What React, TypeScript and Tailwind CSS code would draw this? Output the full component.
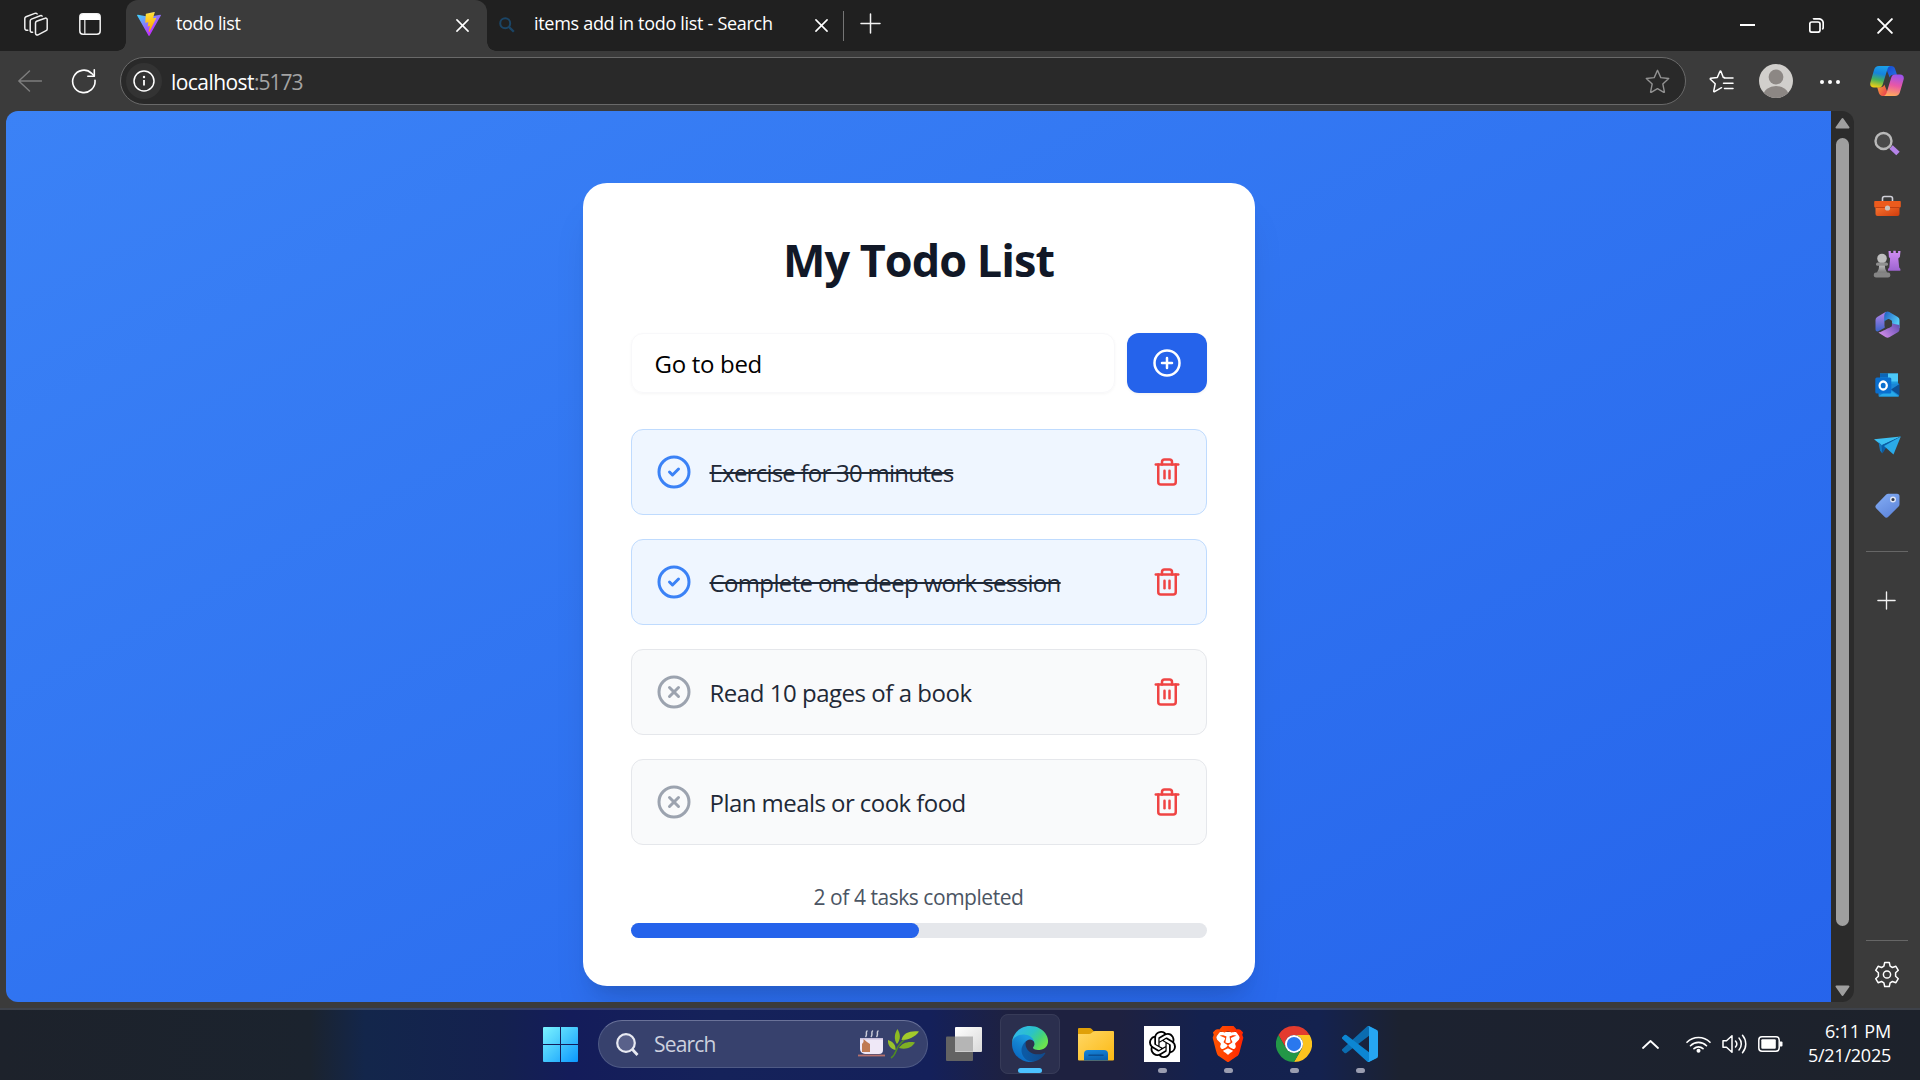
import React from "react";
import { CircleCheck, CirclePlus, CircleX, Trash2 } from "lucide-react";
import { SiBrave, SiOpenai } from "react-icons/si";

type IconProps = { className?: string };

/* ---------- browser glyphs ---------- */

const WorkspacesIcon = () => (
  <svg className="h-6 w-6" viewBox="0 0 24 24" fill="none" stroke="#f0f0f0" strokeWidth="1.5" strokeLinejoin="round" strokeLinecap="round">
    <path d="M11.500 11c0-.8.4-1.400 1.100-1.700l8.500-3.100c1-.4 2.100.2 2.100 1.300v9.400c0 .8-.4 1.400-1.100 1.700l-8.100 4.200c-1.100.5-2.500-.2-2.500-1.500z" />
    <path d="M8.600 20.300c-1.500.2-2.400-.6-2.400-1.900V8.900c0-.9.500-1.500 1.200-1.800l8.800-3.400c.8-.3 1.500-.2 1.900.4" />
    <path d="M3.800 18.300C1.900 18.400.8 17.600.8 16V6.600c0-.9.500-1.500 1.200-1.800L10.800 1.400c.9-.3 1.800-.2 2.300.5" />
  </svg>
);

const TabActionsIcon = () => (
  <svg className="h-[22px] w-[22px]" viewBox="0 0 22 22" fill="none">
    <rect x="0.800" y="0.800" width="20.400" height="20.400" rx="3.200" stroke="#f0f0f0" strokeWidth="1.500" />
    <path d="M1 4a3 3 0 0 1 3-3h14a3 3 0 0 1 3 3v3H1z" fill="#fff" />
    <path d="M5.800 7v14" stroke="#d8d8d8" strokeWidth="1.400" />
  </svg>
);

const ViteIcon = () => (
  <svg className="h-6 w-6" viewBox="0 0 256 257">
    <defs>
      <linearGradient id="viteA" x1="0" x2="0.600" y1="0.080" y2="0.800">
        <stop offset="0" stopColor="#41d1ff" />
        <stop offset="1" stopColor="#bd34fe" />
      </linearGradient>
      <linearGradient id="viteB" x1="0.430" x2="0.500" y1="0.020" y2="0.890">
        <stop offset="0" stopColor="#ffea83" />
        <stop offset="0.083" stopColor="#ffdd35" />
        <stop offset="1" stopColor="#ffa800" />
      </linearGradient>
    </defs>
    <path fill="url(#viteA)" d="M255.153 37.938L134.897 252.976c-2.483 4.440-8.862 4.466-11.382.048L.875 37.958c-2.746-4.814 1.371-10.646 6.827-9.670l120.385 21.517a6.537 6.537 0 0 0 2.322-.004l117.867-21.483c5.438-.991 9.574 4.796 6.877 9.620Z" />
    <path fill="url(#viteB)" d="M185.432.063L96.440 17.501a3.268 3.268 0 0 0-2.634 3.014l-5.474 92.456a3.268 3.268 0 0 0 3.997 3.378l24.777-5.718c2.318-.535 4.413 1.507 3.936 3.838l-7.361 36.047c-.495 2.426 1.782 4.500 4.151 3.780l15.304-4.649c2.372-.720 4.652 1.360 4.150 3.788l-11.698 56.621c-.732 3.542 3.979 5.473 5.943 2.437l1.313-2.028l72.516-144.720c1.215-2.423-.880-5.186-3.540-4.672l-25.505 4.922c-2.396.462-4.435-1.770-3.759-4.114l16.646-57.705c.677-2.350-1.370-4.583-3.769-4.113Z" />
  </svg>
);

const CloseGlyph = ({ className = "h-[13px] w-[13px]" }: IconProps) => (
  <svg className={className} viewBox="0 0 14 14" stroke="#fff" strokeWidth="1.700" strokeLinecap="round">
    <path d="M1 1l12 12M13 1L1 13" />
  </svg>
);

const PlusGlyph = ({ className = "h-[21px] w-[21px]" }: IconProps) => (
  <svg className={className} viewBox="0 0 21 21" stroke="#f2f2f2" strokeWidth="1.500" strokeLinecap="round">
    <path d="M10.500 1v19M1 10.500h19" />
  </svg>
);

const BingGlyph = () => (
  <svg className="h-4 w-4" viewBox="0 0 16 16" fill="none" stroke="#1b4566" strokeWidth="2">
    <circle cx="6.200" cy="6.200" r="5" />
    <path d="M9.800 9.800l5 5" strokeWidth="2.300" />
  </svg>
);

const BackGlyph = () => (
  <svg className="h-6 w-6" viewBox="0 0 24 24" fill="none" stroke="#7e7e7e" strokeWidth="1.400" strokeLinecap="round" strokeLinejoin="round">
    <path d="M23.500 12H.8M11.500 2L.8 12l10.700 10" />
  </svg>
);

const ReloadGlyph = () => (
  <svg className="h-[26px] w-[26px]" viewBox="0 0 26 26" fill="none" stroke="#fff" strokeWidth="1.600" strokeLinecap="round" strokeLinejoin="round">
    <path d="M24 12.300A11.200 11.200 0 1 1 20.600 5.300L23 7.800" />
    <path d="M23.300 1.800v6.400h-6.500" />
  </svg>
);

const InfoGlyph = () => (
  <svg className="h-[22px] w-[22px]" viewBox="0 0 22 22" fill="none">
    <circle cx="11" cy="11" r="10" stroke="#fff" strokeWidth="1.500" />
    <path d="M11 10v5.500" stroke="#fff" strokeWidth="1.800" />
    <circle cx="11" cy="7" r="1.200" fill="#fff" />
  </svg>
);

const StarGlyph = () => (
  <svg className="h-[25px] w-[25px]" viewBox="0 0 25 25" fill="none" stroke="#929292" strokeWidth="1.400" strokeLinejoin="round">
    <path d="M12.500 1.300l3.300 7.300 7.900.9-5.900 5.400 1.600 7.900c.1.500-.2.700-.6.500l-6.300-3.700-6.300 3.700c-.4.200-.7 0-.6-.5l1.600-7.900L1.300 9.500l7.900-.9z" />
  </svg>
);

const FavoritesGlyph = () => (
  <svg className="h-[25px] w-[25px]" viewBox="0 0 25 25" fill="none" stroke="#fff" strokeWidth="1.500" strokeLinejoin="round" strokeLinecap="round">
    <path d="M15.500 8.600l-1.200-.1-2.400-6.200c-.2-.5-.7-.5-.9 0L8.300 8.500l-6.500.7c-.6.100-.8.700-.4 1.100l4.800 4.500-1.500 7.300c-.1.600.4.900.9.600l6.900-4" />
    <path d="M15.500 9h8.500M14.500 14.300h9.500M15.500 19.500h8.500" />
  </svg>
);

const AvatarGlyph = () => (
  <svg className="h-[34px] w-[34px]" viewBox="0 0 34 34">
    <defs>
      <clipPath id="avatarClip"><circle cx="17" cy="17" r="17" /></clipPath>
    </defs>
    <g clipPath="url(#avatarClip)">
      <rect width="34" height="34" fill="#d1cfcc" />
      <circle cx="17" cy="13" r="7.400" fill="#8c8784" />
      <ellipse cx="17" cy="31.500" rx="12.500" ry="9.500" fill="#8c8784" />
    </g>
  </svg>
);

const CopilotGlyph = () => (
  <svg className="h-[32px] w-[34px]" viewBox="0 0 34 32">
    <defs>
      <linearGradient id="copA" x1="0.500" x2="0.300" y1="0" y2="1">
        <stop offset="0" stopColor="#1b9fe8" />
        <stop offset="0.350" stopColor="#1683dd" />
        <stop offset="0.650" stopColor="#46b15c" />
        <stop offset="1" stopColor="#f2cf14" />
      </linearGradient>
      <linearGradient id="copB" x1="0.600" x2="0.400" y1="0" y2="1">
        <stop offset="0" stopColor="#9c53ec" />
        <stop offset="0.500" stopColor="#e957a6" />
        <stop offset="1" stopColor="#ffab5c" />
      </linearGradient>
      <linearGradient id="copC" x1="0" x2="1" y1="0" y2="1">
        <stop offset="0" stopColor="#1546c9" />
        <stop offset="1" stopColor="#2873e8" />
      </linearGradient>
      <linearGradient id="copD" x1="0" x2="1" y1="0" y2="0.600">
        <stop offset="0" stopColor="#f9a63a" />
        <stop offset="1" stopColor="#e93c4e" />
      </linearGradient>
    </defs>
    <path d="M15 1h6.300c2 0 3.300 1.200 3.900 3.200l1.800 5.600h-3.800c-2 0-3 1-3.500 2.700z" fill="url(#copC)" />
    <path d="M19 31h-6.300c-2 0-3.300-1.200-3.900-3.200L7.200 22.200h3.600c2 0 3-1 3.500-2.700z" fill="url(#copD)" />
    <path d="M9 1h11.500c-2 .4-2.700 1.900-3.300 3.900l-4.500 14.600c-.6 1.900-1.700 2.900-3.600 2.900H4C1 22.400-.4 20.400.4 17.400L4 5c.8-2.700 2.300-4 5-4z" fill="url(#copA)" />
    <path d="M25 31H13.500c2-.4 2.700-1.900 3.300-3.900l4.500-14.600c.6-1.900 1.700-2.900 3.600-2.900H30c3 0 4.400 2 3.600 5L30 27c-.8 2.700-2.300 4-5 4z" fill="url(#copB)" />
  </svg>
);

/* ---------- sidebar icons ---------- */

const SideSearch = () => (
  <svg className="h-[26px] w-[26px]" viewBox="0 0 26 26" fill="none">
    <path d="M17 16l7 6.500" stroke="#b483e8" strokeWidth="5" />
    <path d="M14 13.500l3 3" stroke="#777" strokeWidth="2" />
    <circle cx="9.500" cy="10" r="8" stroke="#b9b9b9" strokeWidth="2.400" fill="#4a4a4a" />
  </svg>
);

const SideTools = () => (
  <svg className="mt-[3px] h-[22px] w-[27px]" viewBox="0 0 27 22">
    <defs>
      <linearGradient id="toolG" x1="0" x2="1" y1="0" y2="1">
        <stop offset="0" stopColor="#fb7a34" />
        <stop offset="1" stopColor="#cf3b0c" />
      </linearGradient>
    </defs>
    <path d="M8.500 7V3.500a2 2 0 0 1 2-2h6a2 2 0 0 1 2 2V7" fill="none" stroke="#d0d0d8" strokeWidth="1.600" />
    <path d="M1.500 10h24v9a2 2 0 0 1-2 2h-20a2 2 0 0 1-2-2z" fill="url(#toolG)" />
    <path d="M1 6h25a.8.8 0 0 1 .8.8v4.700a1 1 0 0 1-1 1H1.200a1 1 0 0 1-1-1V6.800A.8.8 0 0 1 1 6z" fill="#ec5b1d" />
    <path d="M1.500 12.500h24" stroke="#b5380f" strokeWidth="0.800" />
    <circle cx="13.500" cy="13" r="2.600" fill="#c9c2bd" />
  </svg>
);

const SideGames = () => (
  <svg className="h-[28px] w-[28px]" viewBox="0 0 28 28">
    <defs>
      <linearGradient id="rookG" x1="0" x2="0" y1="0" y2="1">
        <stop offset="0" stopColor="#d28ff5" />
        <stop offset="1" stopColor="#9d63cf" />
      </linearGradient>
      <linearGradient id="pawnG" x1="0" x2="0" y1="0" y2="1">
        <stop offset="0" stopColor="#cfcfcf" />
        <stop offset="1" stopColor="#777" />
      </linearGradient>
    </defs>
    <path d="M15.500 1h2.300v2h2.500V.8h2.500V3h2.300V1h2.400l-.6 6-1.600 1.500.9 9 1.200 1.500v1.700H15V19l1.300-1.500.8-9L15.900 7z" fill="url(#rookG)" />
    <path d="M6.500 13h5l.8 6 2 4H3.700l2-4z" fill="url(#pawnG)" />
    <circle cx="9" cy="8.500" r="4.800" fill="#bdbdbd" />
    <rect x="3" y="12.600" width="12" height="3.200" rx="1.600" fill="#8f8f8f" />
    <rect x="0.800" y="22.500" width="16.500" height="5" rx="2.200" fill="#858585" />
  </svg>
);

const SideM365 = () => (
  <svg className="h-[27px] w-[25px]" viewBox="0 0 25 27">
    <defs>
      <linearGradient id="mA" x1="0" x2="0" y1="0" y2="1">
        <stop offset="0" stopColor="#b884ea" />
        <stop offset="1" stopColor="#3d64c9" />
      </linearGradient>
      <linearGradient id="mB" x1="0" x2="1" y1="0" y2="0.600">
        <stop offset="0" stopColor="#1f5cc0" />
        <stop offset="1" stopColor="#56d0f8" />
      </linearGradient>
      <linearGradient id="mC" x1="0" x2="1" y1="0.600" y2="0">
        <stop offset="0" stopColor="#d08ae8" />
        <stop offset="1" stopColor="#5c4bb0" />
      </linearGradient>
    </defs>
    <path d="M11 .800L2.200 5.900A3.500 3.500 0 0 0 .5 8.900v9.300c0 1.800 1.500 2.800 2.900 2l6.300-3.500V9.800c0-1.300.7-2.400 1.800-3z" fill="url(#mA)" />
    <path d="M10.800.900c1.100-.7 2.400-.7 3.500 0l8.500 5a3.500 3.500 0 0 1 1.700 3v8.300l-7.500-4.700V10.500L13.500 8.500 9.200 11V5.500c0-2 .4-3.700 1.600-4.600z" fill="url(#mB)" />
    <path d="M24.500 14v4.200c0 1.200-.6 2.300-1.700 3l-8.500 5c-1.100.6-2.400.6-3.500 0l-7.500-4.800c1.500 0 2.500-.5 9.200-4 2.700-1.400 4.500-2.700 4.500-4.900z" fill="url(#mC)" />
    <path d="M9.700 10l3-1.800c.6-.3 1.200-.3 1.800 0l2.400 1.500v5.600l-3.300 1.900-3.900-2.200z" fill="#3b3b3b" />
  </svg>
);

const SideOutlook = () => (
  <svg className="h-[24px] w-[25px]" viewBox="0 0 25 24">
    <rect x="5" y="0.500" width="18" height="14" fill="#1e9be0" />
    <rect x="13" y="0.500" width="10" height="8" fill="#4cc9f8" />
    <rect x="5" y="0.500" width="8" height="4" fill="#0c66b8" />
    <path d="M3.500 11L24 10.500v12a1 1 0 0 1-1 1H4.500a1 1 0 0 1-1-1z" fill="#1a87d6" />
    <path d="M24.500 11v11.500L16 16.500z" fill="#0d4f94" />
    <path d="M3.500 23.500h20.500L14 16z" fill="#27a9ea" />
    <rect x="0.300" y="4.500" width="16" height="16" rx="1.500" fill="#0a6fcf" />
    <ellipse cx="8.200" cy="12.500" rx="3.600" ry="4" fill="none" stroke="#fff" strokeWidth="2.300" />
  </svg>
);

const SidePlane = () => (
  <svg className="h-[19px] w-[27px]" viewBox="0 0 27 19">
    <path d="M0 3.200L26.800.5 7.800 9.500z" fill="#3cc0f2" />
    <path d="M26.800.5L7.800 9l.6 8.500L12 12z" fill="#0a5ea8" />
    <path d="M26.800.5L10 10l9.500 8.500z" fill="#2aaae8" />
    <path d="M4.500 6L7.800 9.200l.5 8.200-2.300-3z" fill="#1477c0" />
  </svg>
);

const SideTag = () => (
  <svg className="h-[25px] w-[25px]" viewBox="0 0 25 25">
    <defs>
      <linearGradient id="tagG" x1="0" x2="0.600" y1="0" y2="1">
        <stop offset="0" stopColor="#85aef5" />
        <stop offset="1" stopColor="#5f87dc" />
      </linearGradient>
    </defs>
    <path d="M13.200.8h8.800A2.500 2.500 0 0 1 24.500 3.300v8a3 3 0 0 1-.9 2.200L13.300 23.700a2.700 2.700 0 0 1-3.800 0l-8.200-8.200a2.700 2.700 0 0 1 0-3.800L11.200 1.600a3 3 0 0 1 2-.8z" fill="url(#tagG)" />
    <circle cx="18" cy="6.500" r="2.300" fill="#333a4c" stroke="#dfe6f5" strokeWidth="1.400" />
  </svg>
);

const GearGlyph = () => (
  <svg className="h-[27px] w-[26px]" viewBox="0 0 26 27" fill="none" stroke="#fff" strokeWidth="1.500" strokeLinejoin="round">
    <path d="M10.700 1.500h4.600l.8 3.700 2.300 1.300 3.500-1.200 2.400 4-2.700 2.500v3.400l2.700 2.500-2.400 4-3.500-1.200-2.300 1.300-.8 3.700h-4.600l-.8-3.700-2.300-1.300-3.500 1.200-2.400-4 2.700-2.500v-3.400L1.700 9.300l2.400-4 3.500 1.200 2.300-1.300z" />
    <circle cx="13" cy="13.500" r="3.600" />
  </svg>
);

/* ---------- taskbar icons ---------- */

const WindowsLogo = () => (
  <svg className="h-[35px] w-[35px]" viewBox="0 0 35 35">
    <defs>
      <linearGradient id="winG" x1="0" y1="0" x2="35" y2="35" gradientUnits="userSpaceOnUse">
        <stop offset="0" stopColor="#7bf3ff" />
        <stop offset="0.500" stopColor="#44c7fd" />
        <stop offset="1" stopColor="#0b97ff" />
      </linearGradient>
    </defs>
    <path fill="url(#winG)" d="M1 0h16v17H0V1a1 1 0 0 1 1-1zM18 0h16a1 1 0 0 1 1 1v16H18zM0 18h17v17H1a1 1 0 0 1-1-1zM18 18h17v16a1 1 0 0 1-1 1H18z" />
  </svg>
);

const TaskSearchGlyph = () => (
  <svg className="h-[23px] w-[23px]" viewBox="0 0 23 23" fill="none" stroke="#e8eaf2" strokeWidth="2.200">
    <circle cx="10" cy="10" r="8.800" fill="#59618a" />
    <path d="M16 16l5.500 6" strokeWidth="2.800" />
  </svg>
);

const TeaIllustration = () => (
  <svg className="h-[32px] w-[62px]" viewBox="0 0 62 32">
    <g stroke="#c9cbd8" strokeWidth="1.500" fill="none" strokeLinecap="round">
      <path d="M9 3c-1.800 1.500.6 3-1.200 5.500M14.500 3c-1.800 1.500.6 3-1.200 5.500M20 3c-1.800 1.500.6 3-1.200 5.500" />
    </g>
    <path d="M2 10h23v12a4 4 0 0 1-4 4H7a5 5 0 0 1-5-5z" fill="#efe8f7" />
    <path d="M2 10h23v1.500H2z" fill="#c9c0dc" />
    <path d="M5.500 11v3l-1.500 2v8h8v-8l-3-2z" fill="#c07a52" />
    <path d="M0 27.500h27" stroke="#b5706c" strokeWidth="1.800" />
    <path d="M33 30c6-4 4-9 9-14 4-4 7-8 12-10" stroke="#4f8a24" strokeWidth="1.600" fill="none" />
    <path d="M39 16c-3-4-3-10 .5-15 3 5 3.500 10-.5 15z" fill="#8dbb22" />
    <path d="M43.500 12C45 5 52 2.500 61 3.500 57 9 51 12 43.500 12z" fill="#a3cb2b" />
    <path d="M41 20c3-5 9-7 16-5.500-3 5-9 7.500-16 5.500z" fill="#7fb024" />
    <path d="M37.500 22c-5-1-8-5-7.500-10 5 1.500 8 5 7.500 10z" fill="#98c22a" />
  </svg>
);

const TaskViewIcon = () => (
  <svg className="h-[36px] w-[36px]" viewBox="0 0 36 36">
    <defs>
      <linearGradient id="tvG" x1="0" x2="1" y1="0" y2="1">
        <stop offset="0" stopColor="#fff" />
        <stop offset="1" stopColor="#d9d9d9" />
      </linearGradient>
    </defs>
    <rect x="0" y="10.500" width="27" height="24.500" rx="1" fill="#636363" />
    <rect x="9" y="1" width="27" height="25" rx="1" fill="url(#tvG)" />
    <rect x="9" y="10.500" width="18" height="15" fill="#b5b5b5" />
  </svg>
);

const EdgeIcon = () => (
  <svg className="h-9 w-9" viewBox="0 0 256 256">
    <defs>
      <linearGradient id="edgeA" x1="0.200" x2="0.950" y1="0.600" y2="0.600">
        <stop offset="0" stopColor="#0c59a4" />
        <stop offset="1" stopColor="#114a8b" />
      </linearGradient>
      <linearGradient id="edgeB" x1="0.700" x2="0.300" y1="0.200" y2="0.900">
        <stop offset="0" stopColor="#1b9de2" />
        <stop offset="0.500" stopColor="#1380cf" />
        <stop offset="1" stopColor="#0a6bc4" />
      </linearGradient>
      <linearGradient id="edgeC" x1="0.100" x2="0.950" y1="0.200" y2="0.700">
        <stop offset="0" stopColor="#30b6e8" />
        <stop offset="0.450" stopColor="#2bc3c6" />
        <stop offset="0.750" stopColor="#45d37a" />
        <stop offset="1" stopColor="#6be34f" />
      </linearGradient>
    </defs>
    <path fill="url(#edgeA)" d="M231 190.500c-3.400 1.800-6.900 3.400-10.500 4.700-11.500 4.300-23.600 6.500-35.900 6.500-47.300 0-88.500-32.500-88.500-74.300 0-11.400 6.400-21.900 16.400-27.300-42.800 1.800-53.800 46.400-53.800 72.500 0 73.900 68.100 81.400 82.800 81.400 7.900 0 19.800-2.300 27-4.600l1.300-.4a128.340 128.340 0 0 0 66.600-52.800c1.200-1.900.6-4.300-1.200-5.500-1.300-.8-2.900-.9-4.200-.2z" />
    <path fill="url(#edgeB)" d="M105.700 241.400a79.200 79.200 0 0 1-22.700-21.300 80.720 80.720 0 0 1 29.500-120c3.200-1.500 8.500-4.100 15.600-4a32.400 32.400 0 0 1 25.700 13 31.900 31.900 0 0 1 6.300 18.700c0-.2 24.500-79.600-80-79.600-43.900 0-80 41.600-80 78.200-.2 19.300 4 38.500 12.100 56a128.200 128.200 0 0 0 156.400 67 75.300 75.300 0 0 1-62.900-8z" />
    <path fill="url(#edgeC)" d="M152.300 148.900c-.9 1.100-3.400 2.500-3.400 5.700 0 2.600 1.700 5.200 4.800 7.300 14.400 10.100 41.700 8.700 41.800 8.700 10.700 0 21.200-2.900 30.400-8.300a61.800 61.800 0 0 0 30.400-53.200c.3-22.400-8-37.300-11.300-43.900C223.800 23.900 177.700 0 127.600 0 57.600-.1.500 56 0 125.900c.5-36.500 36.800-66 80-66 3.500 0 23.500.3 42 10.100 16.300 8.600 24.900 19 30.800 29.300 6.200 10.700 7.300 24.100 7.300 29.500s-2.700 13.300-7.800 20.100z" />
  </svg>
);

const FolderIcon = () => (
  <svg className="h-9 w-9" viewBox="0 0 36 36">
    <defs>
      <linearGradient id="folG" x1="0" x2="1" y1="0" y2="1">
        <stop offset="0" stopColor="#ffd765" />
        <stop offset="1" stopColor="#fcb913" />
      </linearGradient>
      <linearGradient id="folB" x1="0" x2="0.300" y1="0" y2="1">
        <stop offset="0" stopColor="#1786dc" />
        <stop offset="1" stopColor="#0b62b0" />
      </linearGradient>
    </defs>
    <path d="M0 3a1 1 0 0 1 1-1h10.500a3 3 0 0 1 2.200 1L16 5.500V10H0z" fill="#e0a008" />
    <path d="M0 8h11a4 4 0 0 0 2.500-1l1.500-1.300A3 3 0 0 1 17 5h18a1 1 0 0 1 1 1v27.500a1 1 0 0 1-1 1H1a1 1 0 0 1-1-1z" fill="url(#folG)" />
    <path d="M6 34.500V28a4 4 0 0 1 4-4h16a4 4 0 0 1 4 4v6.500z" fill="url(#folB)" />
    <path d="M11 29.200h14" stroke="#0a4f93" strokeWidth="1.500" strokeLinecap="round" />
  </svg>
);

const OpenAiTile = () => (
  <span className="flex h-9 w-9 items-center justify-center bg-white">
    <SiOpenai className="h-[27px] w-[27px] text-black" />
  </span>
);

const BraveIcon = () => (
  <svg className="h-9 w-9" viewBox="0 0 24 24">
    <defs>
      <linearGradient id="braveG" x1="0" x2="24" y1="0" y2="0" gradientUnits="userSpaceOnUse">
        <stop offset="0" stopColor="#ff5601" />
        <stop offset="0.500" stopColor="#ff4000" />
        <stop offset="1" stopColor="#ff1f01" />
      </linearGradient>
    </defs>
    <path d="M6 4h12l2 3-2 10-6 5-6-5L4 7z" fill="#fff" />
    <SiBrave width="24" height="24" size="24" fill="url(#braveG)" />
  </svg>
);

const ChromeIcon = () => (
  <svg className="h-9 w-9" viewBox="0 0 48 48">
    <path d="M3.215 12A24 24 0 0 1 44.785 12H24A12 12 0 0 0 13.608 30z" fill="#e33b2e" />
    <path d="M44.785 12A24 24 0 0 1 24 48L34.392 30A12 12 0 0 0 24 12z" fill="#fcc31e" />
    <path d="M24 48A24 24 0 0 1 3.215 12L13.608 30A12 12 0 0 0 34.392 30z" fill="#239747" />
    <circle cx="24" cy="24" r="12" fill="#fff" />
    <circle cx="24" cy="24" r="9.500" fill="#2a78ee" />
  </svg>
);

const VsCodeIcon = () => (
  <svg className="h-9 w-9" viewBox="0 0 100 100">
    <path fill="#0b6cb0" d="M96.460 10.800L75.860.880a6.230 6.230 0 0 0-7.110 1.200L1.300 63.580a4.170 4.170 0 0 0 0 6.170l5.510 5a4.170 4.170 0 0 0 5.320.240l81.230-61.620c2.730-2.070 6.650-.120 6.650 3.300v-.240a6.250 6.250 0 0 0-3.540-5.630z" />
    <path fill="#0c86d3" d="M96.460 89.200L75.860 99.120a6.230 6.230 0 0 1-7.110-1.200L1.300 36.420a4.170 4.170 0 0 1 0-6.170l5.510-5a4.170 4.170 0 0 1 5.320-.240l81.230 61.620c2.730 2.070 6.650.120 6.650-3.300v.240a6.250 6.250 0 0 1-3.540 5.630z" />
    <path fill="#26a6f2" d="M75.860 99.130a6.230 6.230 0 0 1-7.110-1.210c2.310 2.300 6.250.670 6.250-2.590V4.670c0-3.260-3.940-4.890-6.250-2.590a6.230 6.230 0 0 1 7.110-1.200l20.600 9.900A6.250 6.250 0 0 1 100 16.410v67.180a6.250 6.250 0 0 1-3.540 5.630z" />
  </svg>
);

const ChevronUpGlyph = () => (
  <svg className="h-[9px] w-[17px]" viewBox="0 0 17 9" fill="none" stroke="#fff" strokeWidth="1.800" strokeLinecap="round" strokeLinejoin="round">
    <path d="M1 8l7.500-7L16 8" />
  </svg>
);

const WifiGlyph = () => (
  <svg className="h-[18px] w-[25px]" viewBox="0 0 25 18" fill="none" stroke="#fff" strokeWidth="1.600" strokeLinecap="round">
    <path d="M1 7.300a16.200 16.200 0 0 1 23 0M4.500 10.700a11.300 11.300 0 0 1 16 0M8 13.700a6.500 6.500 0 0 1 9 0" />
    <circle cx="12.500" cy="15.700" r="2" fill="#fff" stroke="none" />
  </svg>
);

const SpeakerGlyph = () => (
  <svg className="h-[20px] w-[25px]" viewBox="0 0 25 20" fill="none" stroke="#fff" strokeWidth="1.500" strokeLinecap="round" strokeLinejoin="round">
    <path d="M1 6.800h3.500l5.500-5v16.400l-5.500-5H1z" />
    <path d="M13.500 7a4.500 4.500 0 0 1 0 6M17 4a9 9 0 0 1 0 12M20.500 1.200a13.500 13.500 0 0 1 0 17.600" />
  </svg>
);

const BatteryGlyph = () => (
  <svg className="h-[16px] w-[25px]" viewBox="0 0 25 16" fill="none">
    <rect x="0.800" y="0.800" width="20.400" height="14.400" rx="3.200" stroke="#fff" strokeWidth="1.500" />
    <rect x="3.300" y="3.200" width="14.500" height="9.600" rx="1" fill="#fff" />
    <path d="M22 5.500h1.500a1 1 0 0 1 1 1v3a1 1 0 0 1-1 1H22z" fill="#fff" />
  </svg>
);

/* ---------- browser frame ---------- */

function TitleBar() {
  return (
    <header className="flex h-[51px] items-center bg-[#202020] text-[18px] leading-6 text-white">
      <div className="flex w-[117px] items-center gap-[31px] pb-[3px] pl-6">
        <WorkspacesIcon />
        <TabActionsIcon />
      </div>
      <span className="size-[9px] self-end bg-[radial-gradient(circle_at_0_0,transparent_8.5px,#3b3b3b_9px)]" />
      <div className="flex h-full w-[361px] items-center rounded-t-xl bg-[#3b3b3b] pl-[11px] pr-[18px]">
        <div className="pb-[3px]"><ViteIcon /></div>
        <span className="ml-[15px] flex-1 pb-[5px] tracking-[-0.37px]">todo list</span>
        <CloseGlyph className="mb-px h-[13px] w-[13px]" />
      </div>
      <span className="size-[9px] self-end bg-[radial-gradient(circle_at_100%_0,transparent_8.5px,#3b3b3b_9px)]" />
      <div className="flex h-full w-[347px] items-center pl-[3px]">
        <div className="pb-[2px]"><BingGlyph /></div>
        <span className="ml-[19px] flex-1 pb-[5px] tracking-[-0.3px]">items add in todo list - Search</span>
        <CloseGlyph className="mb-px mr-[15px] h-[13px] w-[13px]" />
      </div>
      <span className="h-[30px] w-px bg-[#757575]" />
      <div className="ml-4 pb-1"><PlusGlyph /></div>
      <div className="ml-auto flex items-center pr-[27px]">
        <span className="mb-[2px] h-[2px] w-[15px] bg-white" />
        <svg className="ml-[54px] h-[15px] w-[15px]" viewBox="0 0 15 15" fill="none" stroke="#fff" strokeWidth="1.700">
          <rect x="0.800" y="4" width="10.200" height="10.200" rx="2" />
          <path d="M4 1.200C4.500.8 5 .8 5.500.8H10a4.200 4.200 0 0 1 4.200 4.200v4.500c0 .8-.3 1.400-.9 1.900" />
        </svg>
        <CloseGlyph className="ml-[53px] h-4 w-4" />
      </div>
    </header>
  );
}

function AddressBar() {
  return (
    <div className="flex h-[60px] items-center bg-[#3b3b3b] pl-[18px] pr-4">
      <BackGlyph />
      <div className="ml-[29px]"><ReloadGlyph /></div>
      <div className="ml-[23px] flex h-12 w-[1566px] items-center rounded-full border-[1.500px] border-[#696969] bg-[#292929] pl-[5px] pr-[15px]">
        <span className="flex h-9 w-9 items-center justify-center rounded-full bg-[#333]">
          <InfoGlyph />
        </span>
        <span className="ml-[9px] flex-1 whitespace-nowrap pt-px text-[21px] leading-7">
          <span className="tracking-[-0.56px] text-white">localhost</span>
          <span className="tracking-[-1px] text-[#a3a3a3]">:5173</span>
        </span>
        <StarGlyph />
      </div>
      <div className="ml-[23px]"><FavoritesGlyph /></div>
      <div className="ml-[25px]"><AvatarGlyph /></div>
      <div className="ml-[27px] flex gap-1 pt-px">
        <i className="size-1 rounded-full bg-white" />
        <i className="size-1 rounded-full bg-white" />
        <i className="size-1 rounded-full bg-white" />
      </div>
      <div className="ml-auto"><CopilotGlyph /></div>
    </div>
  );
}

const sideIcons = [SideSearch, SideTools, SideGames, SideM365, SideOutlook, SidePlane, SideTag];

function Sidebar() {
  return (
    <aside className="flex w-[66px] flex-col items-center pt-[3px]">
      {sideIcons.map((Icon, i) => (
        <div key={i} className="flex h-[60.200px] items-center justify-center">
          <Icon />
        </div>
      ))}
      <span className="mt-[16px] h-px w-[42px] bg-[#666]" />
      <div className="mr-px mt-[39px]"><PlusGlyph className="h-[19px] w-[19px]" /></div>
      <span className="mt-auto h-[1.500px] w-[42px] bg-[#666]" />
      <div className="mb-5 mt-5"><GearGlyph /></div>
    </aside>
  );
}

function Scrollbar() {
  return (
    <div className="flex w-[23px] flex-col items-center rounded-r-xl bg-[#2b2b2b] pb-[5px] pt-[6px]">
      <svg className="h-3 w-[15px]" viewBox="0 0 15 12"><path d="M7.500 2L13.500 10.500h-12z" fill="#9f9f9f" stroke="#9f9f9f" strokeWidth="2" strokeLinejoin="round" /></svg>
      <span className="mt-[9px] h-[788px] w-[13px] rounded-full bg-[#9f9f9f]" />
      <svg className="mt-auto h-3 w-[15px]" viewBox="0 0 15 12"><path d="M7.500 10L13.500 1.500h-12z" fill="#9f9f9f" stroke="#9f9f9f" strokeWidth="2" strokeLinejoin="round" /></svg>
    </div>
  );
}

/* ---------- todo page ---------- */

type Todo = { text: string; done: boolean; tracking: string };

const todos: Todo[] = [
  { text: "Exercise for 30 minutes", done: true, tracking: "tracking-[-0.76px]" },
  { text: "Complete one deep work session", done: true, tracking: "tracking-[-0.64px]" },
  { text: "Read 10 pages of a book", done: false, tracking: "tracking-[-0.47px]" },
  { text: "Plan meals or cook food", done: false, tracking: "tracking-[-0.55px]" },
];

function TodoRow({ todo }: { todo: Todo }) {
  return (
    <li
      className={
        todo.done
          ? "flex h-[86px] items-center rounded-xl border border-[#bfdbfe] bg-[#eff6ff] px-6"
          : "flex h-[86px] items-center rounded-xl border border-[#e5e7eb] bg-[#f9fafb] px-6"
      }
    >
      {todo.done ? <CircleCheck size={36} color="#3b82f6" /> : <CircleX size={36} color="#9ca3af" />}
      <span className={"ml-[18px] flex-1 pt-px text-[24px] leading-9 text-[#1f2937] " + todo.tracking}>
        <span className={todo.done ? "line-through decoration-2" : ""}>{todo.text}</span>
      </span>
      <Trash2 size={30} color="#ef4444" />
    </li>
  );
}

function TodoPage() {
  const done = todos.filter((t) => t.done).length;
  return (
    <main className="flex-1 overflow-hidden rounded-l-xl">
      <div className="flex h-[965px] items-start justify-center bg-linear-to-br from-[#3b82f6] to-[#2563eb] pt-[72px]">
        <section className="h-[803px] w-[672px] rounded-3xl bg-white p-12 shadow-[0_30px_38px_-8px_rgba(0,0,0,0.1),0_12px_15px_-9px_rgba(0,0,0,0.1)]">
          <h1 className="mb-12 h-[54px] pt-[2px] text-center text-[45px] font-bold leading-[54px] tracking-[-0.97px] text-[#111827]">
            My Todo List
          </h1>
          <div className="flex gap-3">
            <div className="flex h-[60px] flex-1 items-center rounded-xl border border-[#f8f8fa] px-[23px] pt-px text-[24px] leading-9 tracking-[-0.3px] text-black shadow-[0_1px_3px_rgba(0,0,0,0.04)]">
              Go to bed
            </div>
            <button className="flex h-[60px] w-20 items-center justify-center rounded-xl bg-[#2563eb] shadow-[0_1px_3px_rgba(0,0,0,0.06)]">
              <CirclePlus size={30} color="#fff" />
            </button>
          </div>
          <ul className="mt-9 flex flex-col gap-6">
            {todos.map((t) => (
              <TodoRow key={t.text} todo={t} />
            ))}
          </ul>
          <p className="mt-9 h-[30px] pt-px text-center text-[21px] leading-[30px] tracking-[-0.46px] text-[#4b5563]">
            {done} of {todos.length} tasks completed
          </p>
          <div className="mt-3 h-[15px] rounded-full bg-[#e5e7eb]">
            <div className="h-full rounded-full bg-[#2563eb]" style={{ width: `${(done / todos.length) * 100}%` }} />
          </div>
        </section>
      </div>
    </main>
  );
}

/* ---------- taskbar ---------- */

const pinned = [
  { Icon: TaskViewIcon, state: "none" },
  { Icon: EdgeIcon, state: "active" },
  { Icon: FolderIcon, state: "none" },
  { Icon: OpenAiTile, state: "open" },
  { Icon: BraveIcon, state: "open" },
  { Icon: ChromeIcon, state: "open" },
  { Icon: VsCodeIcon, state: "open" },
];

function Taskbar() {
  return (
    <footer className="flex h-[72px] items-center border-t-2 border-[#ffffff26] bg-[linear-gradient(90deg,#1d222b_0px,#1b232e_310px,#13264b_365px,#14214f_500px,#141c5a_570px,#15225a_720px,#14205a_930px,#1e2140_1010px,#1e2140_1120px,#14214e_1200px,#14224f_1320px,#1c2230_1400px,#1d222b_1920px)] bg-origin-border pb-[2px] pl-[543px] pr-[29px]">
      <WindowsLogo />
      <div className="ml-5 flex h-12 w-[330px] items-center rounded-full border border-[#4f5a85] border-t-[#6a7299] bg-[#37416d] pl-[17px] pr-[7px]">
        <TaskSearchGlyph />
        <span className="ml-[15px] flex-1 pb-px text-[21px] leading-7 tracking-[-0.82px] text-[#ccd0de]">Search</span>
        <TeaIllustration />
      </div>
      <nav className="ml-[6px] flex gap-[6px]">
        {pinned.map(({ Icon, state }, i) => (
          <div
            key={i}
            className={
              state === "active"
                ? "flex h-[60px] w-[60px] flex-col items-center rounded-lg bg-[#2b2f4e] pt-3 outline outline-1 -outline-offset-1 outline-[#373b58]"
                : "flex h-[60px] w-[60px] flex-col items-center pt-3"
            }
          >
            <Icon />
            {state === "active" && <span className="mt-[6px] h-[5px] w-6 rounded-full bg-[#4cc2ff]" />}
            {state === "open" && <span className="mt-[6px] h-[5px] w-[9px] rounded-full bg-[#9a9db0]" />}
          </div>
        ))}
      </nav>
      <div className="ml-auto flex items-center">
        <div className="mr-[27px]"><ChevronUpGlyph /></div>
        <div className="mr-[11px]"><WifiGlyph /></div>
        <div className="mr-[11px]"><SpeakerGlyph /></div>
        <div className="mr-[25px]"><BatteryGlyph /></div>
        <div className="pb-[2px] text-right text-[18px] leading-6 text-white">
          <div className="tracking-[-0.18px]">6:11 PM</div>
          <div className="tracking-[-0.24px]">5/21/2025</div>
        </div>
      </div>
    </footer>
  );
}

export default function App() {
  return (
    <div className="flex h-[1080px] w-[1920px] flex-col overflow-hidden bg-[#3b3b3b] font-['Open_Sans','Noto_Sans',sans-serif]">
      <TitleBar />
      <AddressBar />
      <div className="flex h-[897px] pl-[6px]">
        <div className="flex h-[891px] flex-1">
          <TodoPage />
          <Scrollbar />
        </div>
        <Sidebar />
      </div>
      <Taskbar />
    </div>
  );
}
